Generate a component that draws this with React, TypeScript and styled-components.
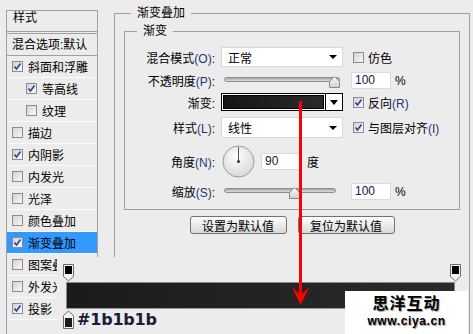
import React from "react";
import styled, { createGlobalStyle } from "styled-components";

const GlobalStyle = createGlobalStyle`
  html, body {
    margin: 0;
    padding: 0;
    background: #ececec;
  }
  body {
    font-family: "Liberation Sans", "Noto Sans CJK SC", sans-serif;
    font-size: 12px;
    color: #000;
  }
`;

const Dialog = styled.div`
  position: relative;
  width: 473px;
  height: 334px;
  overflow: hidden;
  background: #ececec;
  display: flex;
  align-items: flex-start;
`;

/* ---------- left style list ---------- */

const Sidebar = styled.div`
  margin: 10px 0 0 6px;
  width: 92px;
  height: 340px;
  box-sizing: border-box;
  border: 1px solid #a0a0a0;
  border-bottom: none;
  flex-shrink: 0;
`;

const SideHeader = styled.div`
  height: 23px;
  box-sizing: border-box;
  border-bottom: 3px double #a0a0a0;
  padding: 0 0 0 6px;
  line-height: 14px;
`;

const BlendRow = styled.div`
  height: 22px;
  box-sizing: border-box;
  border-bottom: 1px solid #a0a0a0;
  padding: 0 0 3px 5px;
  display: flex;
  align-items: center;
  white-space: nowrap;
`;

const SideRow = styled.div<{ $indent?: boolean; $active?: boolean }>`
  height: 22px;
  box-sizing: border-box;
  border-bottom: 1px solid #fbfbfb;
  padding-left: ${(p) => (p.$indent ? "19px" : "5px")};
  display: flex;
  align-items: center;
  gap: 5px;
  white-space: nowrap;
  background: ${(p) => (p.$active ? "#3399ff" : "transparent")};
`;

const Box = styled.span`
  width: 11px;
  height: 11px;
  box-sizing: border-box;
  border: 1px solid #8c8c8c;
  background: linear-gradient(135deg, #d2d2d2 0%, #f9f9f9 100%);
  display: inline-flex;
  align-items: center;
  justify-content: center;
  flex-shrink: 0;
`;

const CheckBox = ({ checked }: { checked?: boolean }) => (
  <Box>
    {checked && (
      <svg width="9" height="9" viewBox="0 0 9 9">
        <path d="M1.5 4.5 L3.5 7 L7.5 1.5" fill="none" stroke="#2a3f9e" strokeWidth="1.6" />
      </svg>
    )}
  </Box>
);

/* ---------- right panel ---------- */

const Main = styled.div`
  margin: 5px 0 0 16px;
  width: 356px;
  flex-shrink: 0;
`;

const OuterGroup = styled.fieldset`
  margin: 0;
  padding: 2px 9px 0 9px;
  width: 356px;
  height: 360px;
  box-sizing: border-box;
  border: 1px solid #a0a0a0;
  min-width: 0;
`;

const GroupTitle = styled.legend<{ $offset: number }>`
  margin-left: ${(p) => p.$offset}px;
  padding: 0 6px;
  line-height: 16px;
  font-size: 12px;
`;

const InnerGroup = styled.fieldset`
  margin: 0;
  padding: 8px 0 9px 0;
  border: 1px solid #a0a0a0;
  min-width: 0;
`;

const FieldRow = styled.div<{ $h: number; $mt: number }>`
  display: grid;
  grid-template-columns: 96px 130px auto;
  align-items: center;
  height: ${(p) => p.$h}px;
  margin-top: ${(p) => p.$mt}px;
`;

const Label = styled.div`
  text-align: right;
  padding-right: 6px;
  white-space: nowrap;
`;

const Key = styled.span`
  color: #1f3577;
`;

const Select = styled.div`
  width: 122px;
  height: 100%;
  box-sizing: border-box;
  background: #fff;
  border: 1px solid #d8d8d8;
  padding: 0 5px 0 6px;
  display: flex;
  align-items: center;
  justify-content: space-between;

  &::after {
    content: "";
    border-left: 4px solid transparent;
    border-right: 4px solid transparent;
    border-top: 4px solid #000;
  }
`;

const Option = styled.div`
  display: flex;
  align-items: center;
  gap: 4px;
  margin-left: 2px;
  white-space: nowrap;
`;

const NumberBox = styled.div<{ $w?: number }>`
  width: ${(p) => p.$w ?? 40}px;
  height: 17px;
  box-sizing: border-box;
  background: #fff;
  border: 1px solid #dadada;
  padding-left: 3px;
  line-height: 15px;
  color: #0c1a4a;
`;

const Unit = styled.span`
  margin-left: 4px;
`;

const NumberCell = styled.div`
  display: flex;
  align-items: center;
`;

const Slider = styled.div<{ $w: number }>`
  position: relative;
  margin-left: 3px;
  width: ${(p) => p.$w}px;
  height: 17px;
`;

const Track = styled.div`
  position: absolute;
  left: 0;
  right: 0;
  top: 5px;
  height: 5px;
  box-sizing: border-box;
  border: 1px solid #8e8e8e;
  border-radius: 3px;
  background: linear-gradient(#a4a4a4, #dedede);
`;

const Thumb = styled.svg`
  position: absolute;
  top: 4px;
`;

const SliderControl = ({ width, pct }: { width: number; pct: number }) => (
  <Slider $w={width}>
    <Track />
    <Thumb width="11" height="12" viewBox="0 0 11 12" style={{ left: Math.round(pct * (width - 11)) }}>
      <defs>
        <linearGradient id="thumbFill" x1="0" y1="0" x2="0" y2="1">
          <stop offset="0" stopColor="#fafafa" />
          <stop offset="1" stopColor="#cfcfcf" />
        </linearGradient>
      </defs>
      <path d="M0.5 11.5 V5.5 L5.5 0.5 L10.5 5.5 V11.5 Z" fill="url(#thumbFill)" stroke="#8a8a8a" />
    </Thumb>
  </Slider>
);

const GradientPicker = styled.div`
  width: 122px;
  height: 100%;
  box-sizing: border-box;
  border: 1px solid #000;
  display: flex;
  background: #fff;
`;

const Swatch = styled.div`
  flex: 1;
  border: 1px solid #fff;
  background: linear-gradient(to right, #151515, #2b2b2b);
  outline: 1px solid #000;
  outline-offset: -2px;
`;

const PickerArrow = styled.div`
  width: 16px;
  border-left: 1px solid #000;
  display: flex;
  align-items: center;
  justify-content: center;

  &::after {
    content: "";
    border-left: 4px solid transparent;
    border-right: 4px solid transparent;
    border-top: 5px solid #000;
  }
`;

const AngleCell = styled.div`
  grid-column: 2 / 4;
  display: flex;
  align-items: center;
  gap: 6px;
  margin-left: 1px;
`;

const Dial = () => (
  <svg width="33" height="33" viewBox="0 0 33 33">
    <defs>
      <radialGradient id="dialFill" cx="0.45" cy="0.35" r="0.7">
        <stop offset="0" stopColor="#ffffff" />
        <stop offset="1" stopColor="#d6d6d6" />
      </radialGradient>
    </defs>
    <circle cx="16.5" cy="16.5" r="15.5" fill="url(#dialFill)" stroke="#9a9a9a" />
    <line x1="16.5" y1="16.5" x2="16.5" y2="2" stroke="#555" strokeWidth="1" />
    <circle cx="16.5" cy="16.5" r="1.6" fill="#3c3c3c" />
  </svg>
);

const ButtonRow = styled.div`
  display: flex;
  justify-content: center;
  gap: 11px;
  margin-top: 6px;
`;

const Button = styled.div`
  width: 97px;
  height: 18px;
  box-sizing: border-box;
  border: 1px solid #727272;
  border-radius: 3px;
  background: linear-gradient(#fdfdfd, #d9d9d9);
  display: flex;
  align-items: center;
  justify-content: center;
  font-size: 12px;
`;

/* ---------- overlays ---------- */

const GradientEditor = styled.div`
  position: absolute;
  left: 57px;
  top: 257px;
  width: 410px;
  bottom: 0;
  background: #ececec;
  padding-top: 7px;
  box-sizing: border-box;
`;

const StopRow = styled.div`
  display: flex;
  justify-content: space-between;
  width: 398px;
  margin-left: 6px;
  height: 18px;
`;

const Strip = styled.div`
  margin-left: 9px;
  width: 389px;
  height: 27px;
  box-sizing: border-box;
  border: 1px solid #8a8a8a;
  border-bottom-color: #9a9a9a;
  background: linear-gradient(to right, #1b1b1b, #2b2b2b);
`;

const ColorRow = styled.div`
  display: flex;
  align-items: center;
  gap: 3px;
  margin: 1px 0 0 6px;
`;

const ColorCode = styled.span`
  font-family: "DejaVu Sans", sans-serif;
  font-weight: bold;
  font-size: 16px;
  line-height: 18px;
  color: #1a1c3a;
  letter-spacing: -0.2px;
`;

const TopStop = () => (
  <svg width="11" height="18" viewBox="0 0 11 18">
    <path d="M0.5 0.5 H10.5 V12.5 L5.5 17 L0.5 12.5 Z" fill="#f2f2f2" stroke="#6e6e6e" />
    <rect x="2" y="2" width="7" height="8" fill="#000" />
  </svg>
);

const BottomStop = () => (
  <svg width="11" height="19" viewBox="0 0 11 19">
    <path d="M0.5 18.5 H10.5 V5.5 L5.5 1 L0.5 5.5 Z" fill="#f2f2f2" stroke="#6e6e6e" />
    <rect x="2" y="8" width="7" height="9" fill="#1b1b1b" />
  </svg>
);

const Watermark = styled.div`
  position: absolute;
  right: 5px;
  bottom: 0;
  width: 123px;
  height: 43px;
  background: #fff;
  display: flex;
  flex-direction: column;
  align-items: center;
  padding-top: 2px;
  box-sizing: border-box;
`;

const MarkTitle = styled.div`
  font-family: "Noto Sans CJK SC", sans-serif;
  font-weight: bold;
  font-size: 16px;
  line-height: 19px;
  height: 19px;
  letter-spacing: 1px;
  color: #000;
  text-shadow: 1px 1px 1px #9a9a9a, -1px -1px 0 #fff;
`;

const MarkUrl = styled.div`
  margin-top: 2px;
  font-family: "Liberation Sans", sans-serif;
  font-weight: bold;
  font-size: 12px;
  line-height: 14px;
  letter-spacing: 0.6px;
  color: #000;
  text-shadow: 1px 1px 1px #9a9a9a;
`;

const Arrow = styled.svg`
  position: absolute;
  left: 290px;
  top: 100px;
`;

const styleItems = [
  { name: "斜面和浮雕", checked: true },
  { name: "等高线", checked: true, indent: true },
  { name: "纹理", indent: true },
  { name: "描边" },
  { name: "内阴影", checked: true },
  { name: "内发光" },
  { name: "光泽" },
  { name: "颜色叠加" },
  { name: "渐变叠加", checked: true, active: true },
  { name: "图案叠加" },
  { name: "外发光" },
  { name: "投影", checked: true },
  { name: "" },
];

const App = () => {
  return (
    <>
      <GlobalStyle />
      <Dialog>
        <Sidebar>
          <SideHeader>样式</SideHeader>
          <BlendRow>混合选项:默认</BlendRow>
          {styleItems.map((item, i) => (
            <SideRow key={i} $indent={item.indent} $active={item.active}>
              {item.name && <CheckBox checked={item.checked} />}
              {item.name}
            </SideRow>
          ))}
        </Sidebar>

        <Main>
          <OuterGroup>
            <GroupTitle $offset={7}>渐变叠加</GroupTitle>
            <InnerGroup>
              <GroupTitle $offset={12}>渐变</GroupTitle>

              <FieldRow $h={20} $mt={0}>
                <Label>
                  混合模式<Key>(O)</Key>:
                </Label>
                <Select>正常</Select>
                <Option>
                  <CheckBox />
                  <span>仿色</span>
                </Option>
              </FieldRow>

              <FieldRow $h={17} $mt={5}>
                <Label>
                  不透明度<Key>(P)</Key>:
                </Label>
                <SliderControl width={116} pct={1} />
                <NumberCell>
                  <NumberBox>100</NumberBox>
                  <Unit>%</Unit>
                </NumberCell>
              </FieldRow>

              <FieldRow $h={18} $mt={4}>
                <Label>渐变:</Label>
                <GradientPicker>
                  <Swatch />
                  <PickerArrow />
                </GradientPicker>
                <Option>
                  <CheckBox checked />
                  <span>
                    反向<Key>(R)</Key>
                  </span>
                </Option>
              </FieldRow>

              <FieldRow $h={21} $mt={6}>
                <Label>
                  样式<Key>(L)</Key>:
                </Label>
                <Select>线性</Select>
                <Option>
                  <CheckBox checked />
                  <span>
                    与图层对齐<Key>(I)</Key>
                  </span>
                </Option>
              </FieldRow>

              <FieldRow $h={32} $mt={7}>
                <Label>
                  角度<Key>(N)</Key>:
                </Label>
                <AngleCell>
                  <Dial />
                  <NumberBox>90</NumberBox>
                  <span>度</span>
                </AngleCell>
              </FieldRow>

              <FieldRow $h={17} $mt={6}>
                <Label>
                  缩放<Key>(S)</Key>:
                </Label>
                <SliderControl width={112} pct={0.64} />
                <NumberCell>
                  <NumberBox>100</NumberBox>
                  <Unit>%</Unit>
                </NumberCell>
              </FieldRow>
            </InnerGroup>

            <ButtonRow>
              <Button>设置为默认值</Button>
              <Button>复位为默认值</Button>
            </ButtonRow>
          </OuterGroup>
        </Main>

        <GradientEditor>
          <StopRow>
            <TopStop />
            <TopStop />
          </StopRow>
          <Strip />
          <ColorRow>
            <BottomStop />
            <ColorCode>#1b1b1b</ColorCode>
          </ColorRow>
        </GradientEditor>

        <Watermark>
          <MarkTitle>思洋互动</MarkTitle>
          <MarkUrl>www.ciya.cn</MarkUrl>
        </Watermark>

        <Arrow width="22" height="207" viewBox="0 0 22 207">
          <rect x="9" y="1" width="3" height="195" fill="#ff0000" />
          <path d="M10.5 205 L2 187 L10.5 195 L19.5 187 Z" fill="#ff0000" />
        </Arrow>
      </Dialog>
    </>
  );
};

export default App;
